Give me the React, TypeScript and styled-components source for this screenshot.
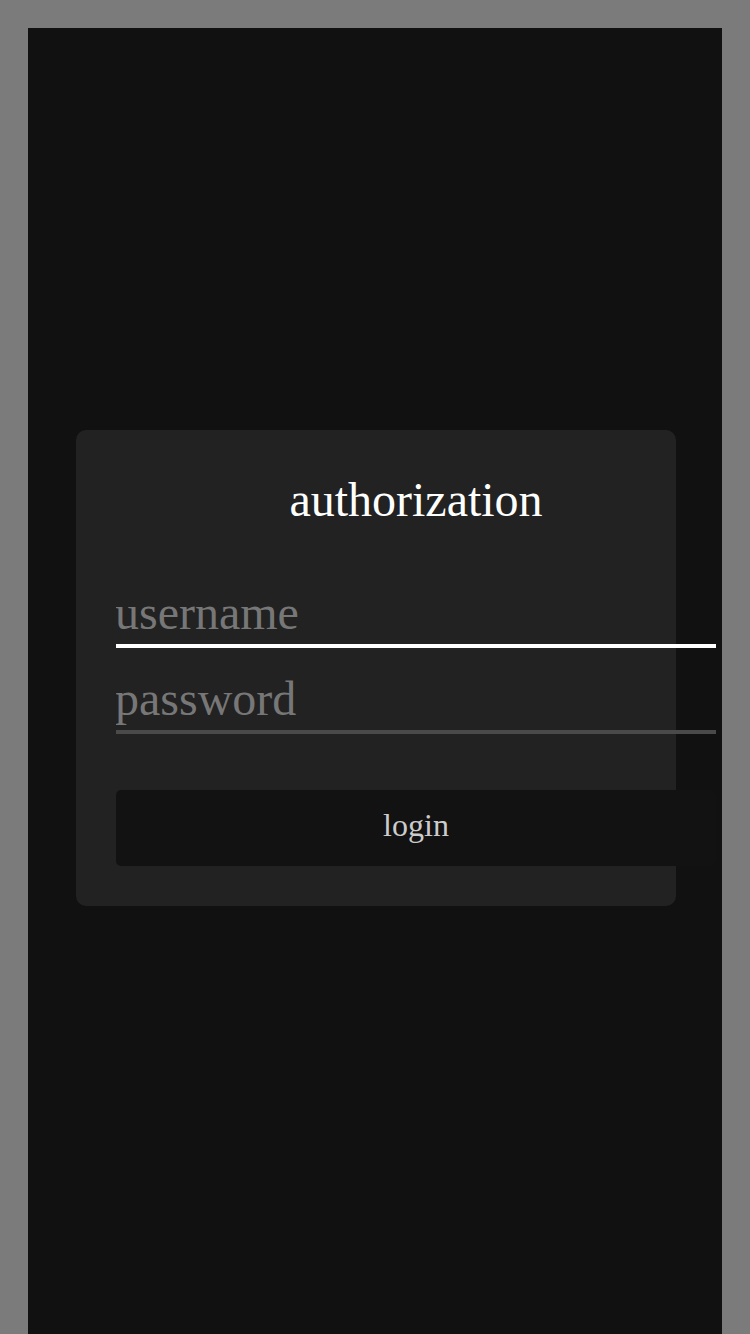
import React from "react";
import styled, { createGlobalStyle } from "styled-components";

const Global = createGlobalStyle`
  html, body {
    margin: 0;
    padding: 0;
    background: #7b7b7b;
  }
  body {
    font-family: "Liberation Serif", "Times New Roman", serif;
  }
  * { box-sizing: border-box; }
`;

const Frame = styled.div`
  padding: 28px 28px 0 28px;
  min-height: 1334px;
  display: flex;
`;

const Screen = styled.main`
  flex: 1;
  min-width: 0;
  background: #111111;
  min-height: 1306px;
  display: flex;
  flex-direction: column;
  align-items: flex-start;
  padding: 402px 0 0 48px;
`;

const Card = styled.section`
  width: 600px;
  flex: none;
  background: #222222;
  border-radius: 10px;
  padding: 40px;
`;

const Form = styled.form`
  width: 600px;
  display: flex;
  flex-direction: column;
`;

const Title = styled.h1`
  margin: 3px 0 36px 0;
  font-family: "Liberation Serif", serif;
  font-weight: 400;
  font-size: 48px;
  line-height: 53px;
  color: #ffffff;
  text-align: center;
`;

const Field = styled.input<{ $active?: boolean }>`
  display: block;
  width: 600px;
  height: 86px;
  padding: 19px 0 0 0;
  text-indent: -1px;
  margin: 0;
  border: none;
  border-bottom: 4px solid ${(p) => (p.$active ? "#ffffff" : "#4a4a4a")};
  background: transparent;
  outline: none;
  font-family: "Liberation Serif", serif;
  font-size: 48px;
  line-height: 53px;
  color: #ffffff;
  &::placeholder {
    color: #777777;
  }
`;

const Button = styled.button`
  margin-top: 56px;
  width: 600px;
  height: 76px;
  border: none;
  border-radius: 5px;
  padding: 0 0 6px 0;
  background: #121212;
  color: #cccccc;
  font-family: "Liberation Serif", serif;
  font-size: 32px;
  cursor: pointer;
`;

export default function App() {
  return (
    <>
      <Global />
      <Frame>
        <Screen>
          <Card>
            <Form onSubmit={(e) => e.preventDefault()}>
              <Title>authorization</Title>
              <Field $active placeholder="username" />
              <Field type="password" placeholder="password" />
              <Button type="submit">login</Button>
            </Form>
          </Card>
        </Screen>
      </Frame>
    </>
  );
}
